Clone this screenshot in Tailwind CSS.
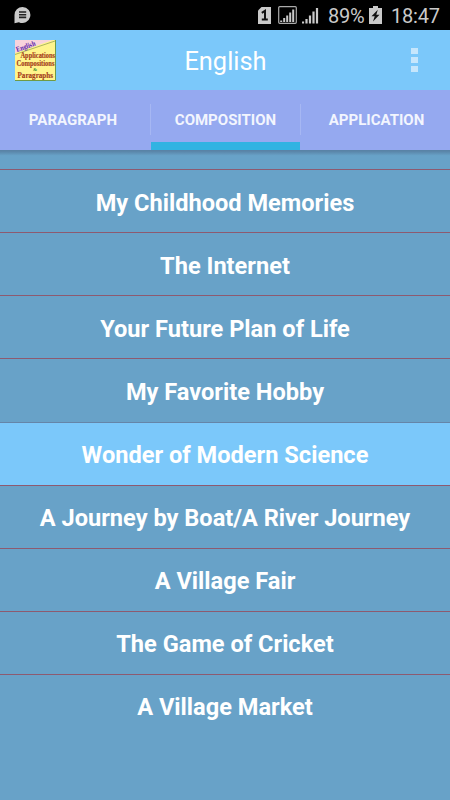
<!DOCTYPE html>
<html lang="en">
<head>
  <meta charset="UTF-8">
  <meta name="viewport" content="width=device-width, initial-scale=1.0">
  <title>English</title>
  <script src="https://cdn.jsdelivr.net/npm/@tailwindcss/browser@4"></script>
</head>
<body class="bg-[#68a2c8] font-['Roboto',sans-serif] h-screen flex flex-col overflow-hidden text-white">

  <!-- Status bar -->
  <div class="h-[30px] shrink-0 bg-black flex items-center justify-between pl-[13px] pr-[10px] text-[#cacaca]">
    <svg class="w-[18px] h-[18px] -mt-px" viewBox="0 0 18 18">
      <path d="M9.5 1a8 8 0 1 1-3.6 15.2L1.5 17.2V9a8 8 0 0 1 8-8z" fill="#cacaca"/>
      <path d="M6 6h7.2M6 8.7h7.2M6 11.4h7.2" stroke="#222" stroke-width="1.6"/>
    </svg>
    <div class="flex items-center">
      <svg class="w-[13px] h-[17px] mr-[7px]" viewBox="0 0 13 17">
        <path d="M3.5 0H13v17H0V3.5z" fill="#cacaca"/>
        <path d="M3.8 5.8L7 3.8V12M3.8 12.6h6" fill="none" stroke="#111" stroke-width="2"/>
      </svg>
      <svg class="w-[19px] h-[18px] mr-[5px]" viewBox="0 0 19 18">
        <rect x=".7" y=".7" width="17.6" height="16.6" rx="1" fill="none" stroke="#aaa" stroke-width="1.2"/>
        <path d="M3.2 14.5v1.5M6.2 12v4M9.2 9.5v6.5M12.2 6.5v9.5M15.2 3.5v12.5" stroke="#cacaca" stroke-width="2"/>
      </svg>
      <svg class="w-[17px] h-[17px] mr-[9px]" viewBox="0 0 17 17">
        <path d="M1 14.5v2M4.5 12v4.5M8 8.5v8M11.5 4.5v12M15 1v15.5" stroke="#cacaca" stroke-width="2.2"/>
      </svg>
      <span class="w-[37px] text-xl leading-[30px] tracking-[-0.2px] mt-[2px] mr-[4px]">89%</span>
      <svg class="w-[13px] h-[18px] mr-[9px]" viewBox="0 0 13 18">
        <path d="M4 0h5v2h4v16H0V2h4z" fill="#cacaca"/>
        <path d="M8.8 3.8L2.5 10.2h3.2L4 15.5l6.5-6.8H7.3z" fill="#111"/>
      </svg>
      <span class="w-[49px] text-xl leading-[30px] tracking-[-0.2px] mt-[2px]">18:47</span>
    </div>
  </div>

  <!-- Toolbar -->
  <header class="h-[60px] shrink-0 bg-[#7bc8fa] flex items-center justify-between pl-[15px] pr-[31px]">
    <svg class="w-[41px] h-[41px] overflow-visible" viewBox="0 0 41 41">
      <rect width="41" height="41" fill="#fff48c"/>
      <path d="M0 0H38L0 13z" fill="#f8d3dc"/>
      <path d="M0 14.5L40 1" stroke="#8b9a50" stroke-width=".7"/>
      <path d="M40.5 0v40.5H0" fill="none" stroke="#6f9b45" stroke-width="1"/>
      <g font-family="Liberation Serif, serif" font-weight="bold">
        <text x="2" y="12" font-size="7.5" fill="#5a22a8" transform="rotate(-19 2 12)" textLength="20" lengthAdjust="spacingAndGlyphs">English</text>
        <g fill="#a33a18" stroke="#a33a18" stroke-width=".15">
          <text x="5.5" y="17.5" font-size="8.5" textLength="34.500" lengthAdjust="spacingAndGlyphs">Applications</text>
          <text x="1.5" y="26" font-size="8.5" textLength="38" lengthAdjust="spacingAndGlyphs">Compositions</text>
          <text x="2.5" y="37.500" font-size="9" textLength="35.5" lengthAdjust="spacingAndGlyphs">Paragraphs</text>
        </g>
        <text x="18" y="31" font-size="5" fill="#3a8a28">&amp;</text>
      </g>
    </svg>
    <h1 class="text-[25.4px] leading-none mt-[4px] -ml-[16px]">English</h1>
    <div class="w-[8px] flex flex-col gap-[3px]">
      <span class="w-[7px] h-[6px] bg-[#c5e6fc]"></span>
      <span class="w-[7px] h-[6px] bg-[#c5e6fc]"></span>
      <span class="w-[7px] h-[6px] bg-[#c5e6fc]"></span>
    </div>
  </header>

  <!-- Tabs -->
  <nav class="h-[60px] shrink-0 bg-[#95a9f0] grid grid-cols-[150px_151px_149px] grid-rows-[60px] text-[15px] leading-[61px] font-bold text-center text-[#f2f5fe]">
    <div class="pr-[4px]">PARAGRAPH</div>
    <div class="relative">
      COMPOSITION
      <span class="absolute left-0 top-[14px] w-px h-[31px] bg-[#a6b7f3]"></span>
      <span class="absolute right-0 top-[14px] w-px h-[31px] bg-[#a6b7f3]"></span>
      <span class="absolute left-px right-px bottom-0 h-[8px] bg-[#30b3e2]"></span>
    </div>
    <div class="pl-[2px]">APPLICATION</div>
  </nav>

  <!-- Topic list -->
  <main class="grow bg-[#68a2c8]">
    <div class="h-[19px] bg-linear-to-b from-[#5983a6] from-5% to-[#68a2c8] to-30%"></div>
    <ul class="text-[23.6px] font-bold text-center leading-[66px]">
      <li class="h-[63px] border-t border-[#8d5a70]">My Childhood Memories</li>
      <li class="h-[63px] border-t border-[#8d5a70]">The Internet</li>
      <li class="h-[63px] border-t border-[#8d5a70]">Your Future Plan of Life</li>
      <li class="h-[64px] border-t border-[#8d5a70]">My Favorite Hobby</li>
      <li class="h-[63px] border-t border-[#6585a8] bg-[#7bc8fa] leading-[65px]">Wonder of Modern Science</li>
      <li class="h-[63px] border-t border-[#8d5a70] leading-[65px]">A Journey by Boat/A River Journey</li>
      <li class="h-[63px] border-t border-[#8d5a70] leading-[65px]">A Village Fair</li>
      <li class="h-[63px] border-t border-[#8d5a70] leading-[65px]">The Game of Cricket</li>
      <li class="h-[63px] border-t border-[#8d5a70] leading-[65px]">A Village Market</li>
    </ul>
  </main>

</body>
</html>
